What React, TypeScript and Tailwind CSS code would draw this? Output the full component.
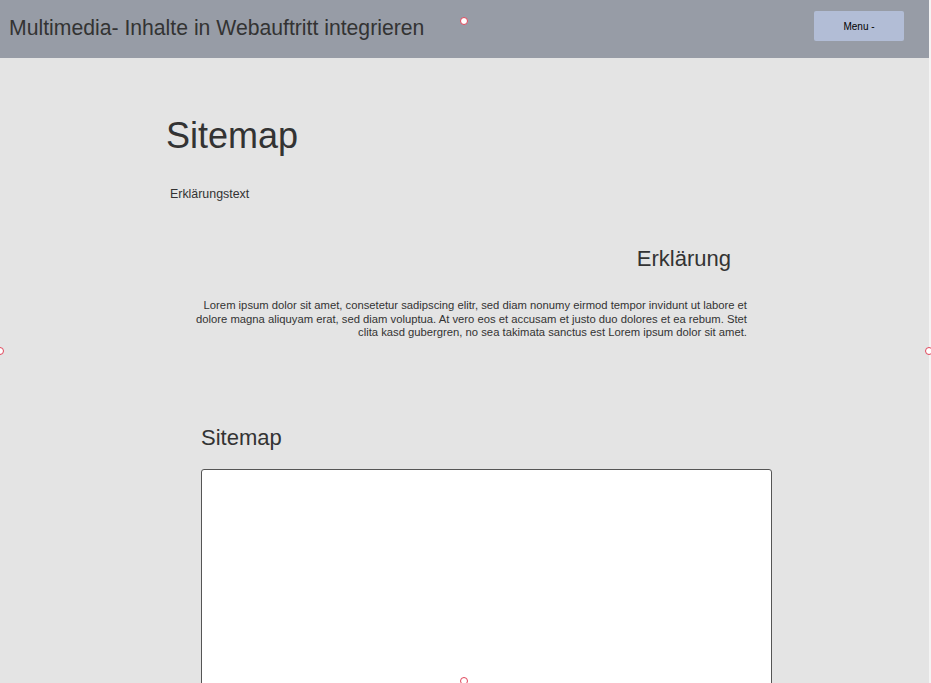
import React from "react";

const Handle = ({ className }: { className: string }) => (
  <span
    className={`absolute w-[8px] h-[8px] rounded-full bg-white border border-[#e0455a] ${className}`}
  />
);

export default function App() {
  return (
    <div
      className="relative w-[931px] h-[683px] overflow-hidden bg-[#e4e4e4] text-[#333]"
      style={{ fontFamily: '"Liberation Sans", Arial, sans-serif' }}
    >
      <div className="flex h-full">
        <div className="w-[929px] flex flex-col">
          {/* Header */}
          <header className="h-[58px] shrink-0 bg-[#979ca6] flex items-center justify-between pl-[9px] pr-[25px]">
            <h1 className="text-[21.2px] leading-none text-[#333] -mt-[2px]">
              Multimedia- Inhalte in Webauftritt integrieren
            </h1>
            <button className="w-[90px] h-[30px] rounded-[2px] bg-[#b2bdd6] text-[10px] text-black -mt-[6px]">
              Menu -
            </button>
          </header>

          {/* Content */}
          <main className="flex flex-col">
            <h2 className="ml-[166px] mt-[58px] text-[36px] leading-[40px]">Sitemap</h2>
            <p className="ml-[170px] mt-[30px] text-[12.4px] leading-[16px]">Erklärungstext</p>

            <div className="ml-[190px] w-[557px] mt-[44px] flex flex-col items-end">
              <h3 className="mr-[16px] text-[22px] leading-[26px]">Erklärung</h3>
              <p className="mt-[27px] text-[11.25px] leading-[13.5px] text-right">
                Lorem ipsum dolor sit amet, consetetur sadipscing elitr, sed diam nonumy eirmod tempor invidunt ut labore et
                dolore magna aliquyam erat, sed diam voluptua. At vero eos et accusam et justo duo dolores et ea rebum. Stet
                clita kasd gubergren, no sea takimata sanctus est Lorem ipsum dolor sit amet.
              </p>
            </div>

            <h3 className="ml-[201px] mt-[85px] text-[22px] leading-[26px]">Sitemap</h3>
            <div className="ml-[201px] mt-[18px] w-[571px] h-[260px] bg-white border border-[#555] rounded-t-[3px]" />
          </main>
        </div>

        {/* Ruler strip */}
        <div className="w-[2px] h-full bg-[#f4f4f4]" />
      </div>

      {/* Selection handles */}
      <Handle className="left-[460px] top-[17px]" />
      <Handle className="-left-[4px] top-[347px]" />
      <Handle className="left-[925px] top-[347px]" />
      <Handle className="left-[460px] top-[677px]" />
    </div>
  );
}
